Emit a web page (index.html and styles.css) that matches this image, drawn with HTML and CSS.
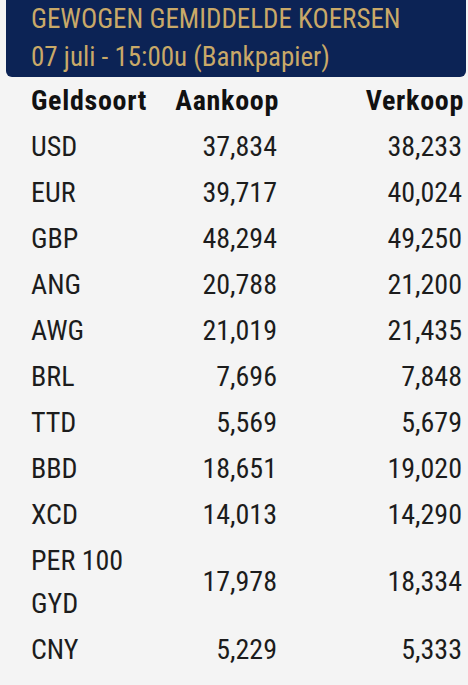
FILE: index.html
```html
<!DOCTYPE html>
<html lang="nl">
<head>
<meta charset="utf-8">
<title>Gewogen gemiddelde koersen</title>
<link rel="stylesheet" href="styles.css">
</head>
<body>
<header class="banner">
  <div class="banner-title">GEWOGEN GEMIDDELDE KOERSEN</div>
  <div class="banner-sub">07 juli - 15:00u (Bankpapier)</div>
</header>
<div class="rates">
  <div class="row head"><span class="cur">Geldsoort</span><span class="num">Aankoop</span><span class="num">Verkoop</span></div>
  <div class="row"><span class="cur">USD</span><span class="num">37,834</span><span class="num">38,233</span></div>
  <div class="row"><span class="cur">EUR</span><span class="num">39,717</span><span class="num">40,024</span></div>
  <div class="row"><span class="cur">GBP</span><span class="num">48,294</span><span class="num">49,250</span></div>
  <div class="row"><span class="cur">ANG</span><span class="num">20,788</span><span class="num">21,200</span></div>
  <div class="row"><span class="cur">AWG</span><span class="num">21,019</span><span class="num">21,435</span></div>
  <div class="row"><span class="cur">BRL</span><span class="num">7,696</span><span class="num">7,848</span></div>
  <div class="row"><span class="cur">TTD</span><span class="num">5,569</span><span class="num">5,679</span></div>
  <div class="row"><span class="cur">BBD</span><span class="num">18,651</span><span class="num">19,020</span></div>
  <div class="row"><span class="cur">XCD</span><span class="num">14,013</span><span class="num">14,290</span></div>
  <div class="row"><span class="cur">PER 100 GYD</span><span class="num">17,978</span><span class="num">18,334</span></div>
  <div class="row"><span class="cur">CNY</span><span class="num">5,229</span><span class="num">5,333</span></div>
</div>
</body>
</html>
```
FILE: styles.css
```css
html, body {
  margin: 0;
  padding: 0;
  background: #f4f4f4;
}
body {
  font-family: "Liberation Sans Narrow", "Roboto Condensed", "DejaVu Sans Condensed", "Liberation Sans", sans-serif;
  font-size: 28px;
  color: #1c1c1c;
}
.banner {
  margin: 0 2px 0 6px;
  background: #0c2355;
  color: #c9a968;
  padding: 0 0 1px 25px;
  border-radius: 0 0 6px 6px;
  font-size: 27px;
  line-height: 38px;
}
.rates {
  padding: 0 6px 0 31px;
}
.row {
  display: grid;
  grid-template-columns: 120px 126px 1fr;
  align-items: center;
  padding: 1.5px 0;
  line-height: 43px;
}
.num {
  text-align: right;
}
.head {
  font-weight: bold;
  color: #111;
  letter-spacing: 0.7px;
}
.head .num {
  margin-right: -2px;
}
```
